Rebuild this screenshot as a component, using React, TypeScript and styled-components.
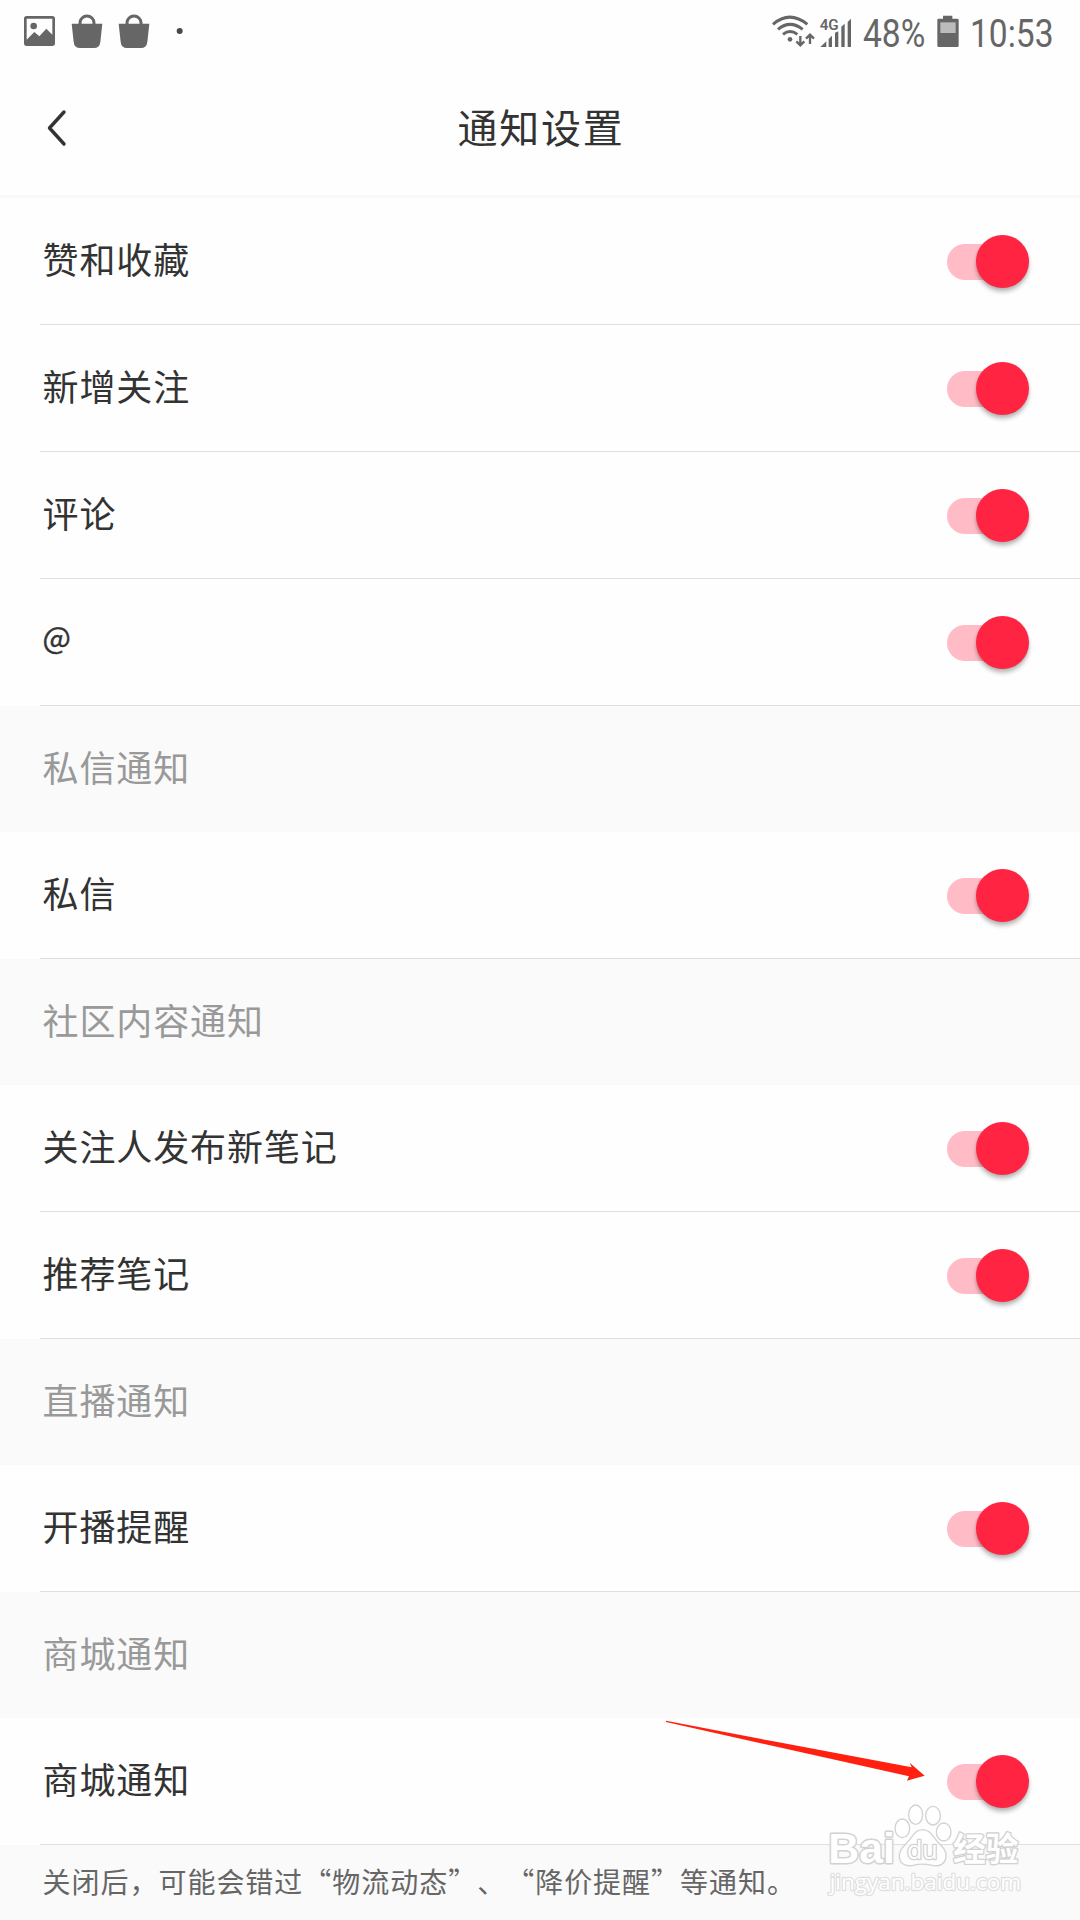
import React from 'react';
import styled, { createGlobalStyle } from 'styled-components';

const GlobalStyle = createGlobalStyle`
  * { box-sizing: border-box; }
  body {
    margin: 0;
    background: #fefefe;
    font-family: "Noto Sans CJK SC", "Noto Sans", sans-serif;
    color: #333;
  }
`;

const Screen = styled.div`
  position: relative;
  width: 1080px;
  height: 1920px;
  overflow: hidden;
  display: flex;
  flex-direction: column;
  background: #fefefe;
`;

const StatusBar = styled.div`
  flex: none;
  height: 64px;
  padding: 0 26px 0 24px;
  display: flex;
  justify-content: space-between;
  align-items: flex-start;
`;

const StatusGroup = styled.div`
  display: flex;
  align-items: flex-start;
  svg { display: block; flex: none; }
`;

const Condensed = styled.div<{ $width: number; $gap: number }>`
  width: ${p => p.$width}px;
  margin-left: ${p => p.$gap}px;
  height: 64px;
  line-height: 68px;
  font-family: Roboto, sans-serif;
  font-size: 39px;
  color: #666;
  white-space: nowrap;
  span {
    display: inline-block;
    transform: scaleX(0.86);
    transform-origin: left center;
  }
`;

const Header = styled.header`
  flex: none;
  height: 134px;
  display: grid;
  grid-template-columns: 120px 1fr 120px;
  align-items: center;
  padding-bottom: 3px;
  border-bottom: 3px solid #f9f9f9;
`;

const BackButton = styled.button`
  border: 0;
  padding: 0 0 0 43px;
  background: none;
  display: flex;
  svg { display: block; }
`;

const Title = styled.h1`
  margin: 0;
  padding: 0 0 5px 2px;
  font-size: 40px;
  line-height: 60px;
  font-weight: 400;
  letter-spacing: 1.8px;
  text-align: center;
`;

const Row = styled.div`
  flex: none;
  height: 127px;
  display: flex;
  justify-content: space-between;
  align-items: center;
  padding: 0 51px 0 42.5px;
  background: linear-gradient(#dfdfdf, #dfdfdf) 40px 100% / 1040px 1px no-repeat;
`;

const Label = styled.span<{ $latin?: boolean }>`
  font-size: ${p => (p.$latin ? 30 : 36)}px;
  line-height: 54px;
  letter-spacing: 0.9px;
  padding-bottom: ${p => (p.$latin ? 13 : 7)}px;
  -webkit-text-stroke: ${p => (p.$latin ? '0.4px #333' : '0')};
`;

const Section = styled.h2`
  flex: none;
  margin: 0;
  height: 126px;
  padding: 0 0 6px 42.5px;
  display: flex;
  align-items: center;
  background: #fafafa;
  color: #999;
  font-size: 36px;
  font-weight: 400;
  letter-spacing: 0.9px;
`;

const Track = styled.button`
  flex: none;
  width: 82px;
  height: 36px;
  padding: 0;
  border: 0;
  border-radius: 18px;
  display: flex;
  align-items: center;
  justify-content: flex-end;
  background: linear-gradient(90deg, #ffbcc6 0 62px, transparent 62px);
`;

const Knob = styled.span`
  width: 53px;
  height: 53px;
  flex: none;
  border-radius: 50%;
  background: #ff2442;
  box-shadow: 0 4px 4px rgba(0, 0, 0, 0.24), 0 1px 3px rgba(0, 0, 0, 0.1);
`;

const Footnote = styled.p`
  flex: 1;
  margin: 0;
  padding: 15px 0 0 42.5px;
  background: #fafafa;
  color: #666;
  font-size: 28px;
  line-height: 42px;
  letter-spacing: 0.98px;
  white-space: nowrap;
  text-spacing-trim: space-all;
`;

const Arrow = styled.svg`
  position: absolute;
  left: 660px;
  top: 1716px;
`;

const Watermark = styled.svg`
  position: absolute;
  left: 827px;
  top: 1803px;
`;

type Item = { kind: 'toggle' | 'section'; text: string };

const items: Item[] = [
  { kind: 'toggle', text: '赞和收藏' },
  { kind: 'toggle', text: '新增关注' },
  { kind: 'toggle', text: '评论' },
  { kind: 'toggle', text: '@' },
  { kind: 'section', text: '私信通知' },
  { kind: 'toggle', text: '私信' },
  { kind: 'section', text: '社区内容通知' },
  { kind: 'toggle', text: '关注人发布新笔记' },
  { kind: 'toggle', text: '推荐笔记' },
  { kind: 'section', text: '直播通知' },
  { kind: 'toggle', text: '开播提醒' },
  { kind: 'section', text: '商城通知' },
  { kind: 'toggle', text: '商城通知' },
];

const LeftIcons = () => (
  <svg width="170" height="64" viewBox="72 0 510 192">
    <path
      fill="#666"
      fillRule="evenodd"
      d="M80 48H157Q165 48 165 56V130Q165 138 157 138H80Q72 138 72 130V56Q72 48 80 48ZM80 56V119L103 96L118 109L139 86L157 104V56Z"
    />
    <circle cx="101" cy="78" r="10" fill="#666" />
    {[215, 356].map(x => (
      <g key={x} transform={`translate(${x} 0)`} fill="#666">
        <path d="M0 71H92L86 126Q84 144 67 144H25Q8 144 6 126Z" />
        <path d="M25 74V69a21 21 0 0 1 42 0V74" fill="none" stroke="#666" strokeWidth="9" />
      </g>
    ))}
    <circle cx="539" cy="93" r="9" fill="#484848" />
  </svg>
);

const SignalIcons = () => (
  <svg width="80" height="64" viewBox="65 0 240 192">
    <g fill="none" stroke="#666" strokeWidth="9">
      <path d="M68 73Q118 30 171 73" />
      <path d="M83 88Q119 58 157 88" />
      <path d="M98 103Q119 86 141 103" />
      <path d="M150 108V136M138 124L150 136L162 124" strokeWidth="7" />
      <path d="M179 132V104M167 116L179 104L191 116" strokeWidth="7" />
    </g>
    <circle cx="119" cy="118" r="7" fill="#666" />
    <g fill="#666">
      <path d="M210 141L228 124V141Z" />
      <path d="M235 117L245 107V141H235Z" />
      <path d="M254 98L264 94V141H254Z" />
      <path d="M273 80L283 71V141H273Z" />
      <path d="M292 66L302 56V141H292Z" />
      <text x="208" y="89" fontFamily="Roboto" fontWeight="600" fontSize="43" textLength="57" lengthAdjust="spacingAndGlyphs">4G</text>
    </g>
  </svg>
);

const Battery = () => (
  <svg width="22" height="64" viewBox="560 0 66 192">
    <path d="M578 47H606V56H621Q625 56 625 60V137Q625 141 621 141H565Q561 141 561 137V60Q561 56 565 56H578Z" fill="#666" />
    <path d="M570 67H616V99H570Z" fill="#bbb" />
  </svg>
);

const PAW = 'M847 390C870 390 878 411 891 426C906 441 919 451 917 471C915 493 897 502 876 497C857 492 837 492 818 497C797 502 778 492 777 471C776 451 789 441 803 426C817 411 824 390 847 390Z';

const BaiduMark = () => (
  <Watermark width="197" height="97" viewBox="560 310 591 291" aria-hidden="true">
    <g fill="#fff" fillOpacity="0.8" stroke="#d2d2d2" strokeWidth="4">
      <ellipse cx="826" cy="345" rx="21" ry="29" />
      <ellipse cx="878" cy="348" rx="22" ry="28" />
      <ellipse cx="786" cy="386" rx="22" ry="28" />
      <ellipse cx="910" cy="397" rx="22" ry="27" />
      <path d={PAW} />
    </g>
    <g fill="#fff" stroke="#d2d2d2" strokeLinejoin="round" paintOrder="stroke">
      <text x="564" y="491" fontFamily="Liberation Sans" fontWeight="700" fontSize="128" strokeWidth="9" textLength="200" lengthAdjust="spacingAndGlyphs">Bai</text>
      <text x="800" y="477" fontFamily="Open Sans" fontSize="76" strokeWidth="8" textLength="92" lengthAdjust="spacingAndGlyphs">du</text>
      <text x="938" y="484" fontFamily="Noto Sans CJK SC" fontWeight="700" fontSize="98" strokeWidth="8" textLength="196" lengthAdjust="spacingAndGlyphs">经验</text>
      <text x="568" y="571" fontFamily="Open Sans" fontSize="63" strokeWidth="7" stroke="#dfdfdf" textLength="574" lengthAdjust="spacingAndGlyphs">jingyan.baidu.com</text>
    </g>
  </Watermark>
);

export default function App() {
  return (
    <Screen lang="zh-CN">
      <GlobalStyle />
      <StatusBar>
        <StatusGroup><LeftIcons /></StatusGroup>
        <StatusGroup>
          <SignalIcons />
          <Condensed $width={74} $gap={11}><span>48%</span></Condensed>
          <Battery />
          <Condensed $width={84} $gap={11}><span>10:53</span></Condensed>
        </StatusGroup>
      </StatusBar>
      <Header>
        <BackButton aria-label="返回">
          <svg width="26" height="40" viewBox="0 0 26 40" fill="none" stroke="#333" strokeWidth="3.4" strokeLinecap="round" strokeLinejoin="round">
            <path d="M21 4L6.5 20L21 36" />
          </svg>
        </BackButton>
        <Title>通知设置</Title>
      </Header>
      {items.map((item, i) =>
        item.kind === 'section' ? (
          <Section key={i}>{item.text}</Section>
        ) : (
          <Row key={i}>
            <Label $latin={item.text === '@'}>{item.text}</Label>
            <Track role="switch" aria-checked="true" aria-label={item.text}><Knob /></Track>
          </Row>
        )
      )}
      <Footnote>关闭后，可能会错过“物流动态”、“降价提醒”等通知。</Footnote>
      <Arrow width="270" height="70" viewBox="60 48 810 210">
        <path fill="#ff2010" d="M78 62L400 124L815 202L809 188L854 227L801 242L807 229L400 138L78 66Z" />
      </Arrow>
      <BaiduMark />
    </Screen>
  );
}
